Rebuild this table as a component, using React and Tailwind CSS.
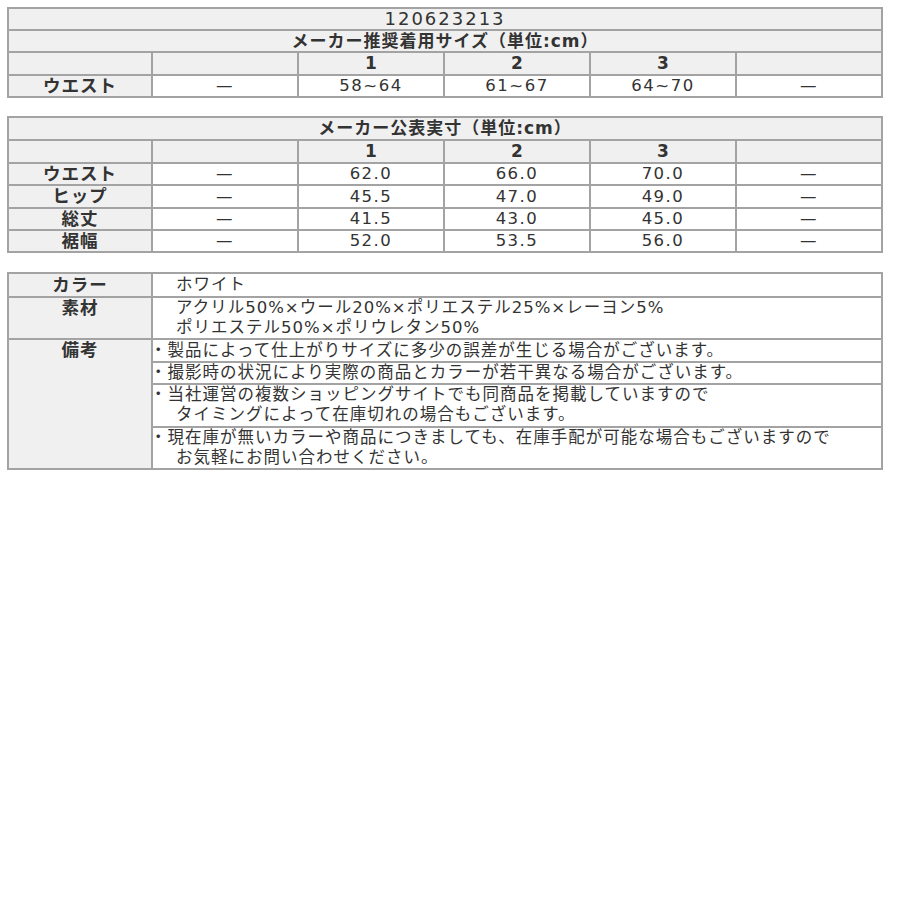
const cols = ["w-[146px]", "w-[146px]", "w-[146px]", "w-[146px]", "w-[146px]"];

function SizeTable({ title, heading, rows, headH, leads }) {
  return (
    <table className="w-[876px] table-fixed border-separate border-spacing-0 border-t-2 border-l-2 border-[#a3a3a3] text-[#333]">
      <colgroup>
        <col className="w-[144px]" />
        {cols.map((c, i) => (
          <col key={i} className={c} />
        ))}
      </colgroup>
      <tbody>
        {title && (
          <tr className="bg-[#f0f0f0] leading-[20px]">
            <td colSpan={6} className="border-r-2 border-b-2 border-[#a3a3a3] p-0 text-center text-[18px] tracking-[2px]">
              {title}
            </td>
          </tr>
        )}
        <tr className={`bg-[#f0f0f0] ${headH}`}>
          <td colSpan={6} className="border-r-2 border-b-2 border-[#a3a3a3] p-0 text-center text-[17px] font-bold tracking-[1px]">
            {heading}
          </td>
        </tr>
        <tr className="bg-[#f0f0f0] leading-[21px]">
          <td className="border-r-2 border-b-2 border-[#a3a3a3] p-0">&nbsp;</td>
          <td className="border-r-2 border-b-2 border-[#a3a3a3] p-0"></td>
          <td className="border-r-2 border-b-2 border-[#a3a3a3] p-0 text-center text-[17px] font-semibold">1</td>
          <td className="border-r-2 border-b-2 border-[#a3a3a3] p-0 text-center text-[17px] font-semibold">2</td>
          <td className="border-r-2 border-b-2 border-[#a3a3a3] p-0 text-center text-[17px] font-semibold">3</td>
          <td className="border-r-2 border-b-2 border-[#a3a3a3] p-0"></td>
        </tr>
        {rows.map((r, i) => (
          <tr key={r[0]} className={leads[i]}>
            <td className="border-r-2 border-b-2 border-[#a3a3a3] bg-[#f0f0f0] p-0 text-center text-[17.5px] font-bold tracking-[1px]">
              {r[0]}
            </td>
            {r.slice(1).map((v, j) => (
              <td key={j} className="border-r-2 border-b-2 border-[#a3a3a3] bg-white p-0 text-center text-[16.5px] tracking-[1.5px]">
                {v}
              </td>
            ))}
          </tr>
        ))}
      </tbody>
    </table>
  );
}

const measure = [
  ["ウエスト", "—", "62.0", "66.0", "70.0", "—"],
  ["ヒップ", "—", "45.5", "47.0", "49.0", "—"],
  ["総丈", "—", "41.5", "43.0", "45.0", "—"],
  ["裾幅", "—", "52.0", "53.5", "56.0", "—"],
];

function Bullet({ children }) {
  return <div className="-ml-[3px]">・{children}</div>;
}

export default function App() {
  return (
    <div className="min-h-[900px] bg-white pt-[7px] pl-[7px] leading-[20px] font-['DejaVu_Sans','Noto_Sans_CJK_JP',sans-serif]">
      <SizeTable
        title="120623213"
        heading="メーカー推奨着用サイズ（単位:cm）"
        headH="leading-[20px]"
        rows={[["ウエスト", "—", "58~64", "61~67", "64~70", "—"]]}
        leads={["leading-[20px]"]}
      />

      <div className="mt-[18px]">
        <SizeTable
          heading="メーカー公表実寸（単位:cm）"
          headH="leading-[21px]"
          rows={measure}
          leads={["leading-[20px]", "leading-[21px]", "leading-[20px]", "leading-[20px]"]}
        />
      </div>

      <table className="mt-[19px] w-[876px] table-fixed border-separate border-spacing-0 border-t-2 border-l-2 border-[#a3a3a3] text-[#333]">
        <colgroup>
          <col className="w-[144px]" />
          <col className="w-[730px]" />
        </colgroup>
        <tbody>
          <tr className="leading-[22px]">
            <td className="border-r-2 border-b-2 border-[#a3a3a3] bg-[#f0f0f0] p-0 text-center text-[17.5px] font-bold tracking-[1px]">
              カラー
            </td>
            <td className="border-r-2 border-b-2 border-[#a3a3a3] bg-white p-0 pl-[23px] text-[16.5px] tracking-[1px]">
              ホワイト
            </td>
          </tr>
          <tr className="leading-[20px]">
            <td className="border-r-2 border-b-2 border-[#a3a3a3] bg-[#f0f0f0] p-0 align-top text-center text-[17.5px] font-bold tracking-[1px]">
              素材
            </td>
            <td className="border-r-2 border-b-2 border-[#a3a3a3] bg-white p-0 pl-[23px] text-[16.5px] tracking-[1px]">
              <div>アクリル50%×ウール20%×ポリエステル25%×レーヨン5%</div>
              <div>ポリエステル50%×ポリウレタン50%</div>
            </td>
          </tr>
          <tr className="leading-[21px]">
            <td
              rowSpan={4}
              className="border-r-2 border-b-2 border-[#a3a3a3] bg-[#f0f0f0] p-0 align-top text-center text-[17.5px] font-bold tracking-[1px]"
            >
              備考
            </td>
            <td className="border-r-2 border-b-2 border-[#a3a3a3] bg-white p-0 text-[16.5px] tracking-[1px]">
              <Bullet>製品によって仕上がりサイズに多少の誤差が生じる場合がございます。</Bullet>
            </td>
          </tr>
          <tr className="leading-[20px]">
            <td className="border-r-2 border-b-2 border-[#a3a3a3] bg-white p-0 text-[16.5px] tracking-[1px]">
              <Bullet>撮影時の状況により実際の商品とカラーが若干異なる場合がございます。</Bullet>
            </td>
          </tr>
          <tr className="leading-[20px]">
            <td className="border-r-2 border-b-2 border-[#a3a3a3] bg-white p-0 pb-[1px] text-[16.5px] tracking-[1px]">
              <Bullet>当社運営の複数ショッピングサイトでも同商品を掲載していますので</Bullet>
              <div className="pl-[23px]">タイミングによって在庫切れの場合もございます。</div>
            </td>
          </tr>
          <tr className="leading-[20px]">
            <td className="border-r-2 border-b-2 border-[#a3a3a3] bg-white p-0 text-[16.5px] tracking-[1px]">
              <Bullet>現在庫が無いカラーや商品につきましても、在庫手配が可能な場合もございますので</Bullet>
              <div className="pl-[23px]">お気軽にお問い合わせください。</div>
            </td>
          </tr>
        </tbody>
      </table>
    </div>
  );
}
